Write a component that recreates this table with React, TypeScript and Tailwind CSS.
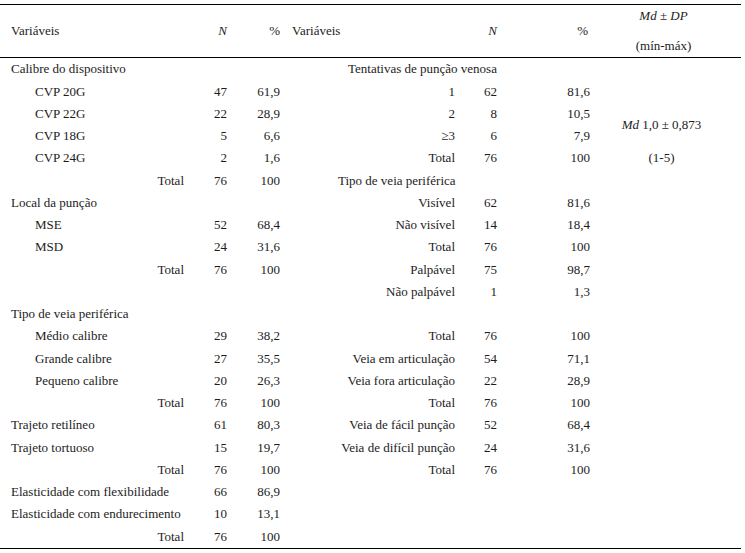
type Kind = "group" | "item" | "total" | "blank"

type Row = {
  kind: Kind
  label?: string
  n?: string
  p?: string
  pad?: string
}

const left: Row[] = [
  { kind: "group", label: "Calibre do dispositivo" },
  { kind: "item", label: "CVP 20G", n: "47", p: "61,9" },
  { kind: "item", label: "CVP 22G", n: "22", p: "28,9" },
  { kind: "item", label: "CVP 18G", n: "5", p: "6,6" },
  { kind: "item", label: "CVP 24G", n: "2", p: "1,6" },
  { kind: "total", label: "Total", n: "76", p: "100" },
  { kind: "group", label: "Local da punção" },
  { kind: "item", label: "MSE", n: "52", p: "68,4" },
  { kind: "item", label: "MSD", n: "24", p: "31,6" },
  { kind: "total", label: "Total", n: "76", p: "100" },
  { kind: "blank" },
  { kind: "group", label: "Tipo de veia periférica" },
  { kind: "item", label: "Médio calibre", n: "29", p: "38,2" },
  { kind: "item", label: "Grande calibre", n: "27", p: "35,5" },
  { kind: "item", label: "Pequeno calibre", n: "20", p: "26,3" },
  { kind: "total", label: "Total", n: "76", p: "100" },
  { kind: "group", label: "Trajeto retilíneo", n: "61", p: "80,3" },
  { kind: "group", label: "Trajeto tortuoso", n: "15", p: "19,7" },
  { kind: "total", label: "Total", n: "76", p: "100" },
  { kind: "group", label: "Elasticidade com flexibilidade", n: "66", p: "86,9" },
  { kind: "group", label: "Elasticidade com endurecimento", n: "10", p: "13,1" },
  { kind: "total", label: "Total", n: "76", p: "100" },
]

const right: Row[] = [
  { kind: "group", label: "Tentativas de punção venosa", pad: "pl-[68px]" },
  { kind: "item", label: "1", n: "62", p: "81,6" },
  { kind: "item", label: "2", n: "8", p: "10,5" },
  { kind: "item", label: "≥3", n: "6", p: "7,9" },
  { kind: "item", label: "Total", n: "76", p: "100" },
  { kind: "group", label: "Tipo de veia periférica", pad: "pl-[58px]" },
  { kind: "item", label: "Visível", n: "62", p: "81,6" },
  { kind: "item", label: "Não visível", n: "14", p: "18,4" },
  { kind: "item", label: "Total", n: "76", p: "100" },
  { kind: "item", label: "Palpável", n: "75", p: "98,7" },
  { kind: "item", label: "Não palpável", n: "1", p: "1,3" },
  { kind: "blank" },
  { kind: "item", label: "Total", n: "76", p: "100" },
  { kind: "item", label: "Veia em articulação", n: "54", p: "71,1" },
  { kind: "item", label: "Veia fora articulação", n: "22", p: "28,9" },
  { kind: "item", label: "Total", n: "76", p: "100" },
  { kind: "item", label: "Veia de fácil punção", n: "52", p: "68,4" },
  { kind: "item", label: "Veia de difícil punção", n: "24", p: "31,6" },
  { kind: "item", label: "Total", n: "76", p: "100" },
  { kind: "blank" },
  { kind: "blank" },
  { kind: "blank" },
]

function LeftLabel({ row }: { row: Row }) {
  if (row.kind === "group") return <div className="flex items-center pl-[11px] whitespace-nowrap">{row.label}</div>
  if (row.kind === "item") return <div className="flex items-center pl-[35px] whitespace-nowrap">{row.label}</div>
  if (row.kind === "total") return <div className="flex items-center justify-end pr-[6px]">{row.label}</div>
  return <div />
}

function RightLabel({ row }: { row: Row }) {
  if (row.kind === "group")
    return <div className={`flex items-center whitespace-nowrap ${row.pad}`}>{row.label}</div>
  if (row.kind === "blank") return <div />
  return <div className="flex items-center justify-end whitespace-nowrap">{row.label}</div>
}

function Num({ v }: { v?: string }) {
  return <div className="flex items-center justify-end">{v}</div>
}

export default function App() {
  return (
    <div className="bg-white w-[745px] h-[553px] pt-[4px] font-['Liberation_Serif',serif] text-[13px] text-[#1c1c1c]">
      <div className="w-[741px] border-t border-b border-black">
        {/* cabeçalho */}
        <div className="grid grid-cols-[190px_37px_53px_175px_42px_93px_151px] h-[52px]">
          <div className="flex items-center pl-[11px]">Variáveis</div>
          <div className="flex items-center justify-end italic">N</div>
          <div className="flex items-center justify-end">%</div>
          <div className="flex items-center pl-[12px]">Variáveis</div>
          <div className="flex items-center justify-end italic">N</div>
          <div className="flex items-center justify-end pr-[2px]">%</div>
          <div className="flex flex-col justify-between items-center pr-[4px]">
            <div className="h-[22px] flex items-center">
              <span className="italic">Md</span>&nbsp;±&nbsp;<span className="italic">DP</span>
            </div>
            <div className="h-[22px] flex items-center">(mín-máx)</div>
          </div>
        </div>

        <div className="flex border-t border-black">
          <div className="grid grid-cols-[190px_37px_53px_175px_42px_93px] auto-rows-[22.25px]">
            {left.map((l, i) => {
              const r = right[i]
              return (
                <div key={i} className="contents">
                  <LeftLabel row={l} />
                  <Num v={l.n} />
                  <Num v={l.p} />
                  <RightLabel row={r} />
                  <Num v={r.n} />
                  <Num v={r.p} />
                </div>
              )
            })}
          </div>
          <div className="w-[151px] flex flex-col items-center pr-[8px]">
            <div className="h-[44.5px]" />
            <div className="h-[44.5px] flex items-center whitespace-nowrap">
              <span className="italic">Md</span>&nbsp;1,0 ± 0,873
            </div>
            <div className="h-[22.25px] flex items-center">(1-5)</div>
          </div>
        </div>
      </div>
    </div>
  )
}
